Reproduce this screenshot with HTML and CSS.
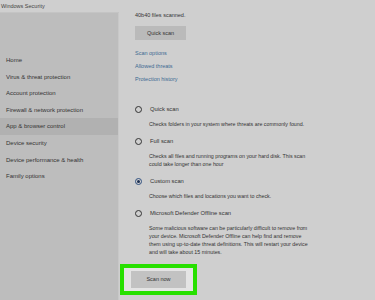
FILE: index.html
```html
<!DOCTYPE html>
<html lang="en">

<head>
    <meta charset="UTF-8" />
    <title>Windows Security</title>
    <link rel="stylesheet" href="styles.css">
</head>

<body>
    <div class="window">
        <div class="left">
            <div class="titlebar">Windows Security</div>
            <ul class="sidebar">
                <li>Home</li>
                <li>Virus &amp; threat protection</li>
                <li>Account protection</li>
                <li>Firewall &amp; network protection</li>
                <li class="active">App &amp; browser control</li>
                <li>Device security</li>
                <li>Device performance &amp; health</li>
                <li>Family options</li>
            </ul>
        </div>

        <div class="main">
            <p class="status">40b40 files scanned.</p>
            <div class="btn quick">Quick scan</div>

            <div class="links">
                <a>Scan options</a>
                <a>Allowed threats</a>
                <a>Protection history</a>
            </div>

            <div class="options">
                <div class="option">
                    <div class="radio-row"><span class="radio"></span>Quick scan</div>
                    <p class="desc">Checks folders in your system where threats are commonly found.</p>
                </div>
                <div class="option">
                    <div class="radio-row"><span class="radio"></span>Full scan</div>
                    <p class="desc">Checks all files and running programs on your hard disk. This scan<br>could take longer than one hour</p>
                </div>
                <div class="option">
                    <div class="radio-row"><span class="radio checked"></span>Custom scan</div>
                    <p class="desc">Choose which files and locations you want to check.</p>
                </div>
                <div class="option">
                    <div class="radio-row"><span class="radio"></span>Microsoft Defender Offline scan</div>
                    <p class="desc">Some malicious software can be particularly difficult to remove from<br>your device. Microsoft Defender Offline can help find and remove<br>them using up-to-date threat definitions. This will restart your device<br>and will take about 15 minutes.</p>
                </div>
            </div>

            <div class="highlight">
                <div class="btn scan">Scan now</div>
            </div>
        </div>
    </div>
</body>

</html>
```

FILE: styles.css
```css
body {
    margin: 0;
    font-family: 'Liberation Sans', Arial, sans-serif;
    font-size: 5.5px;
    color: #333;
    background-color: #cfcfcf;
}

.window {
    display: flex;
    height: 300px;
    overflow: hidden;
}

.left {
    width: 119px;
    display: flex;
    flex-direction: column;
}

.titlebar {
    height: 13px;
    line-height: 13px;
    padding-left: 1px;
    color: #444;
    white-space: nowrap;
    border-bottom: 1px solid #c4c4c4;
    box-sizing: border-box;
}

.sidebar {
    flex: 1;
    list-style: none;
    margin: 0;
    padding: 39px 0 0;
    background-color: #bdbdbd;
    border-right: 1px solid #c8c8c8;
    font-size: 6px;
}

.sidebar li {
    height: 16.6px;
    line-height: 16.6px;
    padding-left: 6px;
    white-space: nowrap;
}

.sidebar li.active {
    background-color: #b1b1b1;
}

.main {
    flex: 1;
    padding: 11px 0 0 16px;
}

.status {
    margin: 0;
    line-height: 8px;
}

.btn {
    background-color: #bababa;
    text-align: center;
    color: #333;
}

.quick {
    margin-top: 7px;
    width: 51px;
    height: 14px;
    line-height: 14px;
}

.links {
    display: flex;
    flex-direction: column;
    gap: 5px;
    margin-top: 9px;
}

.links a {
    line-height: 8px;
    color: #3d6a92;
}

.options {
    margin-top: 21px;
}

.option {
    margin-bottom: 8.5px;
}

.radio-row {
    display: flex;
    align-items: center;
    height: 10px;
    white-space: nowrap;
    font-size: 5.8px;
}

.radio {
    width: 5px;
    height: 5px;
    border: 1.2px solid #333;
    border-radius: 50%;
    margin: 0 8px 0 0;
    position: relative;
}

.radio.checked {
    border-color: #30507e;
}

.radio.checked::after {
    content: "";
    position: absolute;
    left: 1px;
    top: 1px;
    width: 3px;
    height: 3px;
    border-radius: 50%;
    background-color: #1c2f52;
}

.desc {
    margin: 5.5px 0 0 14px;
    font-size: 5.3px;
    line-height: 8px;
    white-space: nowrap;
}

.highlight {
    margin: 0 0 0 -15px;
    width: 77px;
    height: 31px;
    box-sizing: border-box;
    border: 4px solid #27e000;
    background-color: #e4e4e4;
    padding: 3px 7px;
}

.scan {
    height: 17px;
    line-height: 17px;
    background-color: #c2c2c2;
}
```
